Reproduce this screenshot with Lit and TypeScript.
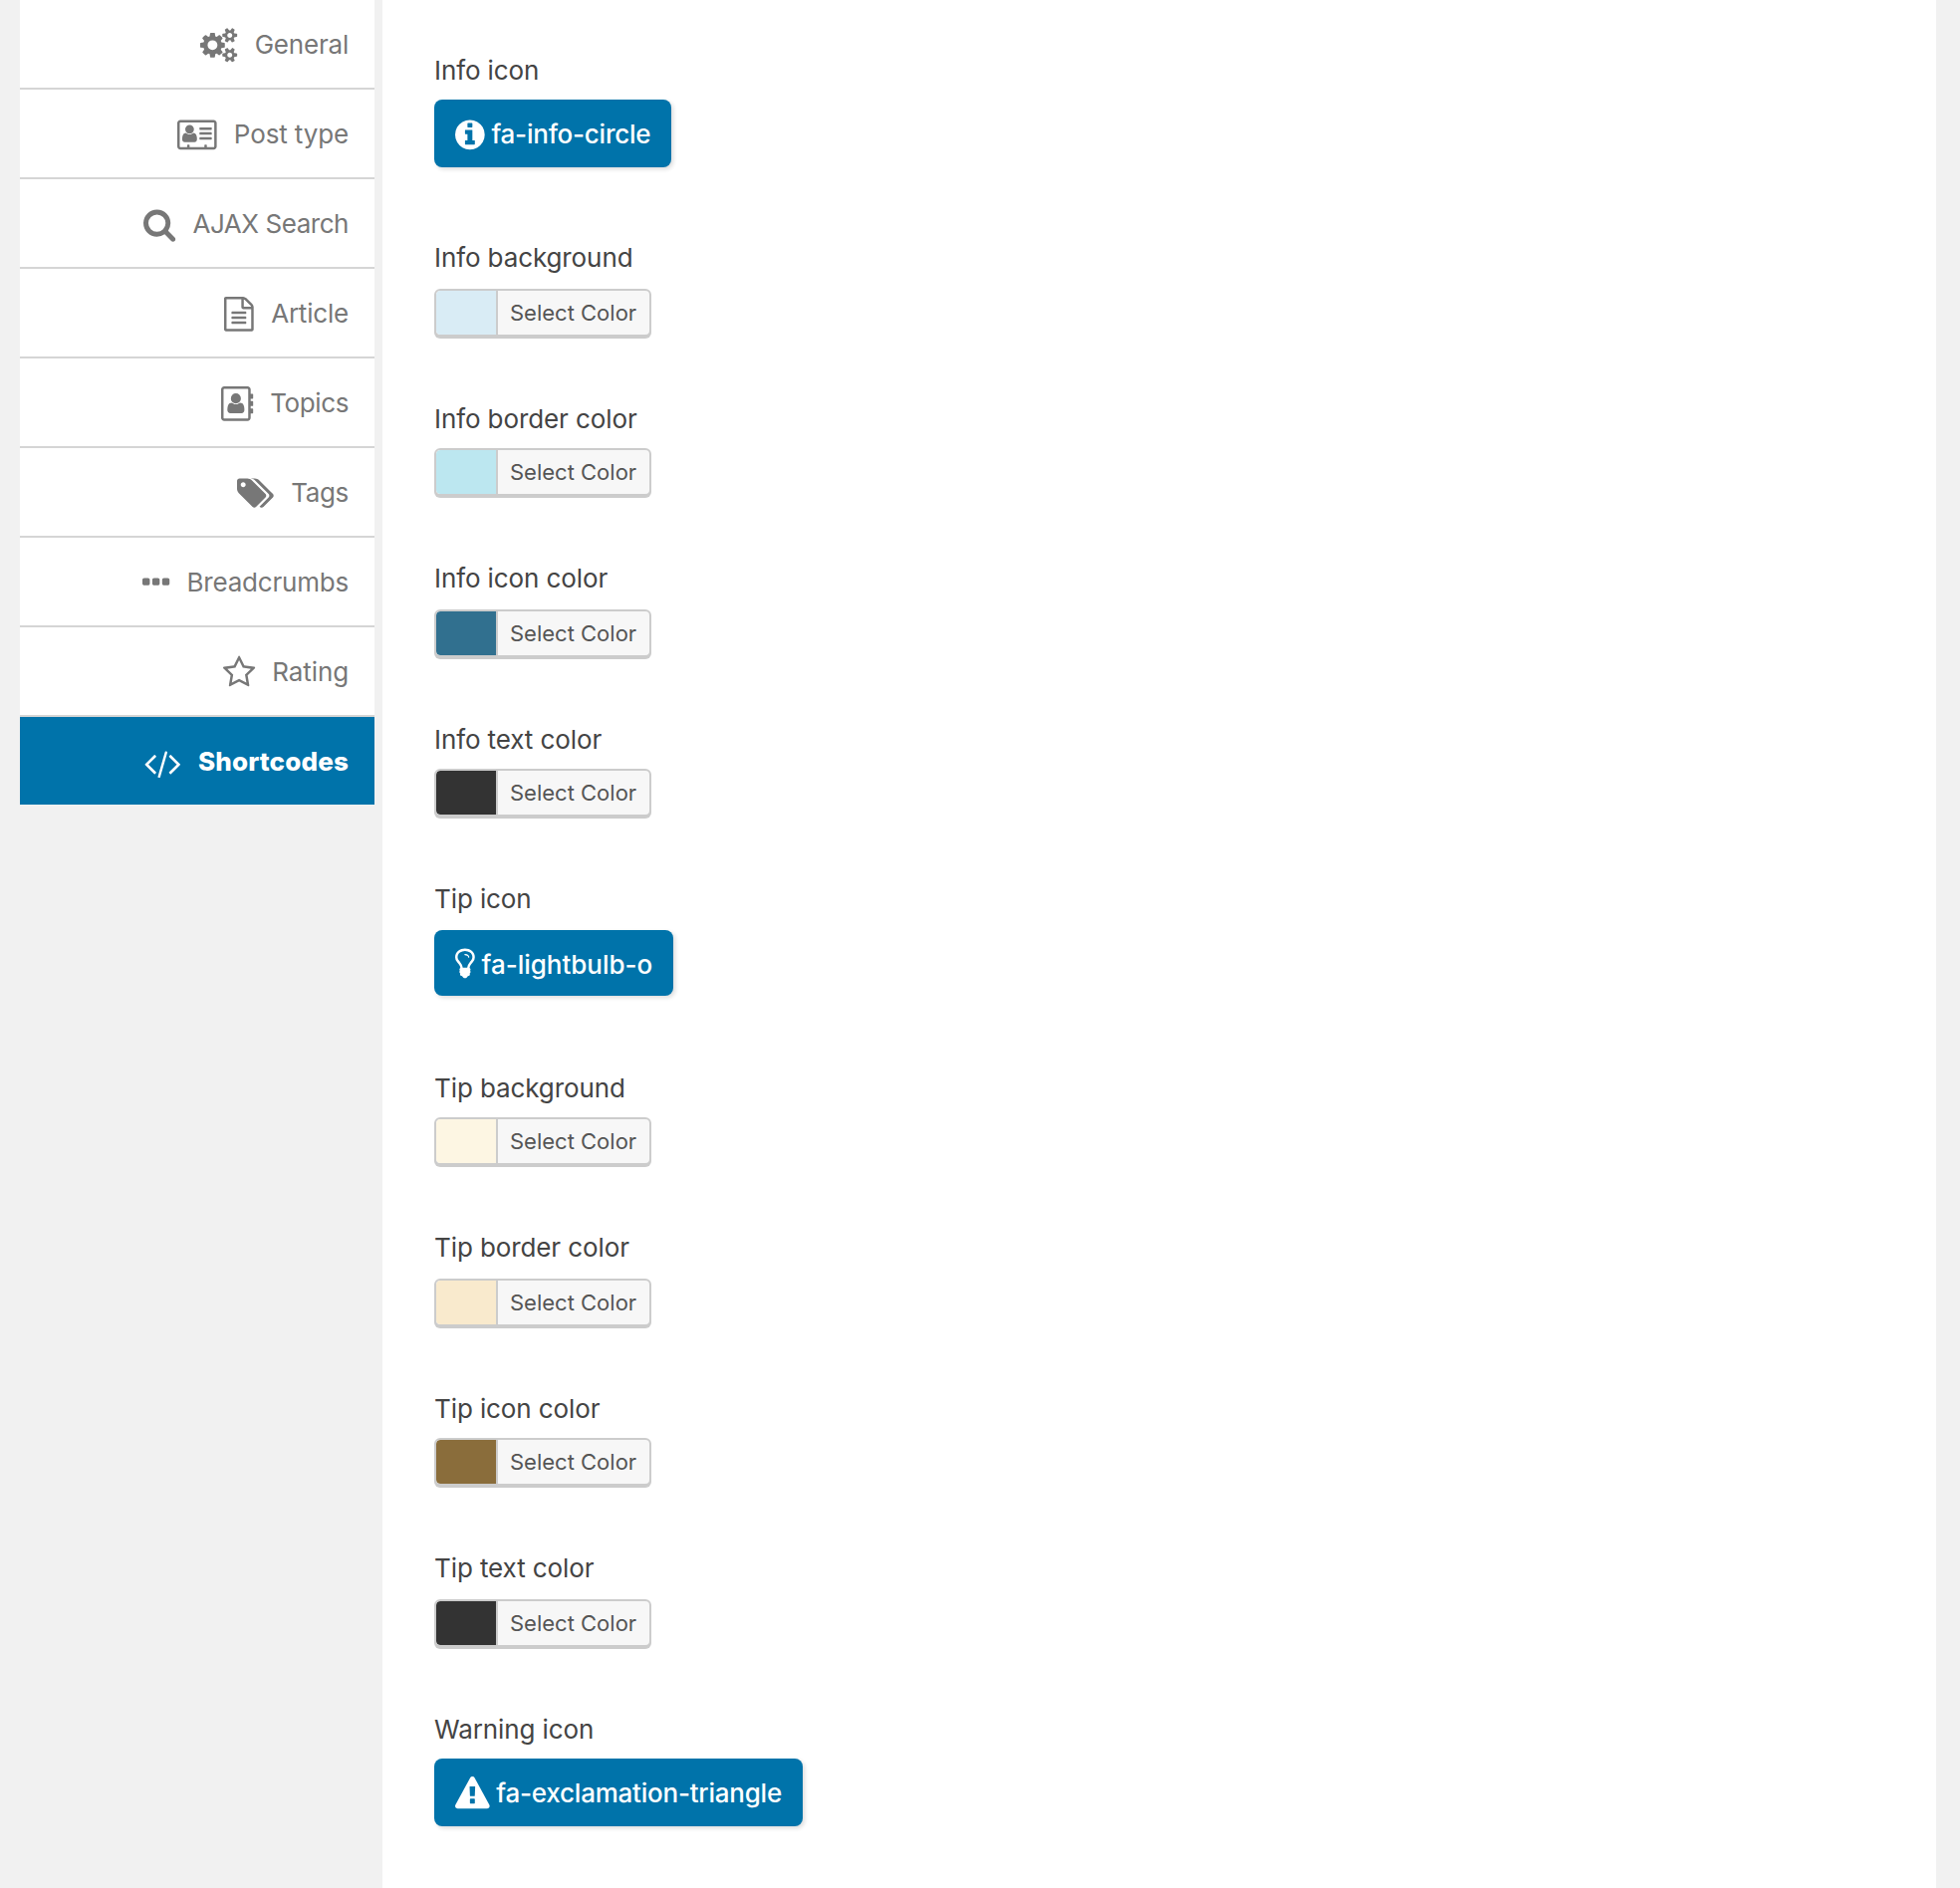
import { LitElement, html, svg, css } from "lit";
import { customElement } from "lit/decorators.js";
import { classMap } from "lit/directives/class-map.js";
import { styleMap } from "lit/directives/style-map.js";

/** Icon outlines on a 1792-unit em; x and w give each glyph's left edge and width. */
interface Glyph {
  x: number;
  w: number;
  dy?: number;
  body: unknown;
}

const EM = 34.6667;

const PERSON =
  "M1024 1131q0-64-9-117.5t-29.5-103-60.5-78-97-28.5q-6 4-30 18t-37.5 21.5-35.5 17.5-43 14.5-42 4.5-42-4.5-43-14.5-35.5-17.5-37.5-21.5-30-18q-57 0-97 28.5t-60.5 78-29.5 103-9 117.5 37 106.5 91 42.5h512q54 0 91-42.5t37-106.5zm-157-520q0-94-66.5-160.5t-160.5-66.5-160.5 66.5-66.5 160.5 66.5 160.5 160.5 66.5 160.5-66.5 66.5-160.5z";

const SMALL_GEAR_BODY =
  "v140q0 16-149 31-12 27-30 52 51 113 51 138 0 4-4 7-122 71-124 71-8 0-46-47t-52-68q-20 2-30 2t-30-2q-14 21-52 68t-46 47q-2 0-124-71-4-3-4-7 0-25 51-138-18-25-30-52-149-15-149-31v-140q0-16 149-31 13-29 30-52-51-113-51-138 0-4 4-7 4-2 35-20t59-34 30-16q8 0 46 46.5t52 67.5q20-2 30-2t30 2q51-71 92-112l6-2q4 0 124 70 4 3 4 7 0 25-51 138 17 23 30 52 149 15 149 31z";

const GLYPHS: Record<string, Glyph> = {
  cogs: {
    x: 0,
    w: 1920,
    body: svg`<path fill-rule="evenodd" d=${
      "M896 896q0-106-75-181t-181-75-181 75-75 181 75 181 181 75 181-75 75-181zm768 512q0-52-38-90t-90-38-90 38-38 90q0 53 37.5 90.5t90.5 37.5 90.5-37.5 37.5-90.5zm0-1024q0-52-38-90t-90-38-90 38-38 90q0 53 37.5 90.5t90.5 37.5 90.5-37.5 37.5-90.5zm-384 421v185q0 10-7 19.5t-16 10.5l-155 24q-11 35-32 76 34 48 90 115 7 11 7 20 0 12-7 19-23 30-82.5 89.5t-78.5 59.5q-11 0-21-7l-115-90q-37 19-77 31-11 108-23 155-7 24-30 24h-186q-11 0-20-7.5t-10-17.5l-23-153q-34-10-75-31l-118 89q-7 7-20 7-11 0-21-8-144-133-144-160 0-9 7-19 10-14 41-53t47-61q-23-44-35-82l-152-24q-10-1-17-9.5t-7-19.5v-185q0-10 7-19.5t16-10.5l155-24q11-35 32-76-34-48-90-115-7-11-7-20 0-12 7-20 22-30 82-89t79-59q11 0 21 7l115 90q34-18 77-32 11-108 23-154 7-24 30-24h186q11 0 20 7.5t10 17.5l23 153q34 10 75 31l118-89q8-7 20-7 11 0 21 8 144 133 144 160 0 8-7 19-12 16-42 54t-45 60q23 48 34 82l152 23q10 2 17 10.5t7 19.5z" +
      "M1920 1338" + SMALL_GEAR_BODY + "M1920 314" + SMALL_GEAR_BODY
    }></path>`,
  },
  card: {
    x: 0,
    w: 2048,
    body: svg`<path d=${PERSON}></path><path d="M1792 1120v-64q0-14-9-23t-23-9h-576q-14 0-23 9t-9 23v64q0 14 9 23t23 9h576q14 0 23-9t9-23zm0-260v-56q0-15-10.500-25.500t-25.500-10.500h-568q-15 0-25.500 10.500t-10.500 25.500v56q0 15 10.500 25.500t25.500 10.500h568q15 0 25.500-10.500t10.500-25.500zm0-252v-64q0-14-9-23t-23-9h-576q-14 0-23 9t-9 23v64q0 14 9 23t23 9h576q14 0 23-9t9-23z"></path><path fill-rule="evenodd" d="M1920 1504v-1216q0-13-9.500-22.500t-22.500-9.500h-1728q-13 0-22.500 9.500t-9.500 22.500v1216q0 13 9.500 22.500t22.500 9.500h352v-96q0-14 9-23t23-9h64q14 0 23 9t9 23v96h768v-96q0-14 9-23t23-9h64q14 0 23 9t9 23v96h352q13 0 22.500-9.500t9.500-22.500zM2048 288v1216q0 66-47 113t-113 47h-1728q-66 0-113-47t-47-113v-1216q0-66 47-113t113-47h1728q66 0 113 47t47 113z"></path>`,
  },
  search: {
    x: 64,
    w: 1664,
    body: svg`<path fill-rule="evenodd" d="M1216 832q0-185-131.500-316.500t-316.500-131.500-316.500 131.500-131.500 316.500 131.500 316.500 316.500 131.500 316.500-131.500 131.500-316.500zm512 832q0 52-38 90t-90 38q-54 0-90-38l-343-342q-179 124-399 124-143 0-273.500-55.500t-225-150-150-225-55.500-273.500 55.500-273.500 150-225 225-150 273.500-55.500 273.500 55.500 225 150 150 225 55.500 273.500q0 220-124 399l343 343q37 37 37 90z"></path>`,
  },
  file: {
    x: 128,
    w: 1536,
    body: svg`<path fill-rule="evenodd" d="M1596 380q28 28 48 76t20 88v1152q0 40-28 68t-68 28h-1344q-40 0-68-28t-28-68v-1600q0-40 28-68t68-28h896q40 0 88 20t76 48zm-444-244v376h376q-10-29-22-41l-313-313q-12-12-41-22zm384 1528v-1024h-416q-40 0-68-28t-28-68v-416h-768v1536h1280zm-1024-864q0-14 9-23t23-9h704q14 0 23 9t9 23v64q0 14-9 23t-23 9h-704q-14 0-23-9t-9-23v-64zm736 224q14 0 23 9t9 23v64q0 14-9 23t-23 9h-704q-14 0-23-9t-9-23v-64q0-14 9-23t23-9h704zm0 256q14 0 23 9t9 23v64q0 14-9 23t-23 9h-704q-14 0-23-9t-9-23v-64q0-14 9-23t23-9h704z"></path>`,
  },
  book: {
    x: 0,
    w: 1664,
    body: svg`<path transform="translate(32 -75) scale(1.15)" d=${PERSON}></path><path fill-rule="evenodd" d="M160 0h1216q66 0 113 47t47 113v1472q0 66-47 113t-113 47h-1216q-66 0-113-47t-47-113v-1472q0-66 47-113t113-47zM160 128q-13 0-22.500 9.500t-9.500 22.500v1472q0 13 9.500 22.500t22.500 9.500h1216q13 0 22.500-9.500t9.500-22.500v-1472q0-13-9.500-22.500t-22.500-9.500z"></path><path d="M1500 384h132q32 0 32 32v192q0 32-32 32h-132zM1500 768h132q32 0 32 32v192q0 32-32 32h-132zM1500 1152h132q32 0 32 32v192q0 32-32 32h-132z"></path>`,
  },
  tags: {
    x: 0,
    w: 1920,
    body: svg`<path fill-rule="evenodd" d="M448 448q0-53-37.500-90.500t-90.500-37.500-90.500 37.500-37.500 90.500 37.500 90.500 90.500 37.500 90.500-37.500 37.500-90.500zm1067 576q0 53-37 90l-491 492q-39 37-91 37-53 0-90-37l-715-716q-38-37-64.500-101t-26.500-117v-416q0-52 38-90t90-38h416q53 0 117 26.500t102 64.500l715 714q37 39 37 91zm384 0q0 53-37 90l-491 492q-39 37-91 37-36 0-59-14t-53-45l470-470q37-37 37-90 0-52-37-91l-715-714q-38-38-102-64.500t-117-26.500h224q53 0 117 26.500t102 64.500l715 714q37 39 37 91z"></path>`,
  },
  dots: {
    x: 192,
    w: 1408,
    body: svg`<path d="M576 736v192q0 40-28 68t-68 28h-192q-40 0-68-28t-28-68v-192q0-40 28-68t68-28h192q40 0 68 28t28 68zm512 0v192q0 40-28 68t-68 28h-192q-40 0-68-28t-28-68v-192q0-40 28-68t68-28h192q40 0 68 28t28 68zm512 0v192q0 40-28 68t-68 28h-192q-40 0-68-28t-28-68v-192q0-40 28-68t68-28h192q40 0 68 28t28 68z"></path>`,
  },
  star: {
    x: 64,
    w: 1664,
    body: svg`<path fill-rule="evenodd" d="M1201 1004l306-297-422-62-189-382-189 382-422 62 306 297-73 421 378-199 377 199zm527-357q0 22-26 48l-363 354 86 500q1 7 1 20 0 50-41 50-19 0-40-12l-449-236-449 236q-22 12-40 12-21 0-31.500-14.500t-10.500-35.500q0-6 2-20l86-500-364-354q-25-27-25-48 0-37 56-46l502-73 225-455q19-41 49-41t49 41l225 455 502 73q56 9 56 46z"></path>`,
  },
  code: {
    x: 2,
    w: 1850,
    dy: 1.2,
    body: svg`<path d="M553 1399l-50 50q-10 10-23 10t-23-10l-466-466q-10-10-10-23t10-23l466-466q10-10 23-10t23 10l50 50q10 10 10 23t-10 23l-393 393 393 393q10 10 10 23t-10 23zm591-1067l-373 1291q-4 13-15.500 19.500t-23.500 2.500l-62-17q-13-4-19.500-15.500t-2.500-24.500l373-1291q4-13 15.500-19.500t23.500-2.500l62 17q13 4 19.500 15.500t2.500 24.500zm657 651l-466 466q-10 10-23 10t-23-10l-50-50q-10-10-10-23t10-23l393-393-393-393q-10-10-10-23t10-23l50-50q10-10 23-10t23 10l466 466q10 10 10 23t-10 23z"></path>`,
  },
  info: {
    x: 128,
    w: 1536,
    body: svg`<path fill-rule="evenodd" d="M1152 1376v-160q0-14-9-23t-23-9h-96v-512q0-14-9-23t-23-9h-320q-14 0-23 9t-9 23v160q0 14 9 23t23 9h96v320h-96q-14 0-23 9t-9 23v160q0 14 9 23t23 9h448q14 0 23-9t9-23zm-128-896v-160q0-14-9-23t-23-9h-192q-14 0-23 9t-9 23v160q0 14 9 23t23 9h192q14 0 23-9t9-23zm640 416q0 209-103 385.500t-279.500 279.500-385.500 103-385.500-103-279.500-279.500-103-385.500 103-385.500 279.500-279.500 385.500-103 385.500 103 279.500 279.500 103 385.500z"></path>`,
  },
  bulb: {
    x: 384,
    w: 1024,
    dy: -2,
    body: svg`<path fill-rule="evenodd" d="M1120 576q0 13-9.500 22.500t-22.500 9.500-22.500-9.500-9.500-22.500q0-46-54-71t-106-25q-13 0-22.500-9.500t-9.500-22.500 9.500-22.500 22.500-9.500q50 0 99.500 16t87 54 37.500 90zm160 0q0-72-34.500-134t-90-101.500-123-62-136.500-22.500-136.500 22.500-123 62-90 101.500-34.500 134q0 101 68 180 10 11 30.500 33t30.500 33q128 153 141 298h228q13-145 141-298 10-11 30.500-33t30.500-33q68-79 68-180zm128 0q0 155-103 268-45 49-74.500 87t-59.500 95.500-34 107.500q47 28 47 82 0 37-25 64 25 27 25 64 0 52-45 81 13 23 13 47 0 46-31.500 71t-77.500 25q-20 44-60 70t-87 26-87-26-60-70q-46 0-77.500-25t-31.500-71q0-24 13-47-45-29-45-81 0-37 25-64-25-27-25-64 0-54 47-82-4-50-34-107.500t-59.500-95.500-74.500-87q-103-113-103-268 0-99 44.500-184.500t117-142 164-89 186.500-32.500 186.500 32.500 164 89 117 142 44.500 184.500z"></path>`,
  },
  warning: {
    x: 0,
    w: 1792,
    body: svg`<path fill-rule="evenodd" d="M1024 1375v-190q0-14-9.500-23.500t-22.500-9.500h-192q-13 0-22.500 9.500t-9.500 23.500v190q0 14 9.500 23.500t22.500 9.500h192q13 0 22.500-9.500t9.500-23.500zm-2-374l18-459q0-12-10-19-13-11-24-11h-220q-11 0-24 11-10 7-10 21l17 457q0 10 10 16.500t24 6.500h185q14 0 23.500-6.500t10.500-16.500zm-14-934l768 1408q35 63-2 126-17 29-46.500 46t-63.500 17h-1536q-34 0-63.500-17t-46.500-46q-37-63-2-126l768-1408q17-31 47-49t65-18 65 18 47 49z"></path>`,
  },
};

function icon(name: string) {
  const g = GLYPHS[name];
  const u = 1792 / EM;
  return html`<svg
    class="icon"
    aria-hidden="true"
    width=${g.w / u}
    height=${EM}
    viewBox="${g.x} ${-(g.dy ?? 0) * u} ${g.w} 1792"
  >${g.body}</svg>`;
}

interface NavItem { label: string; icon: string; track: number; active?: boolean }

const NAV: NavItem[] = [
  { label: "General", icon: "cogs", track: -0.2 },
  { label: "Post type", icon: "card", track: -0.13 },
  { label: "AJAX Search", icon: "search", track: -0.46 },
  { label: "Article", icon: "file", track: -0.2 },
  { label: "Topics", icon: "book", track: -0.38 },
  { label: "Tags", icon: "tags", track: -0.35 },
  { label: "Breadcrumbs", icon: "dots", track: -0.2 },
  { label: "Rating", icon: "star", track: -0.1 },
  { label: "Shortcodes", icon: "code", track: 0.15, active: true },
];

type Field =
  | { kind: "icon"; label: string; icon: string; value: string; track: number; short?: boolean }
  | { kind: "color"; label: string; value: string };

const FIELDS: Field[] = [
  { kind: "icon", label: "Info icon", icon: "info", value: "fa-info-circle", track: -0.23 },
  { kind: "color", label: "Info background", value: "#d9ecf5" },
  { kind: "color", label: "Info border color", value: "#bce7f0" },
  { kind: "color", label: "Info icon color", value: "#31708f" },
  { kind: "color", label: "Info text color", value: "#333333" },
  { kind: "icon", label: "Tip icon", icon: "bulb", value: "fa-lightbulb-o", track: -0.02, short: true },
  { kind: "color", label: "Tip background", value: "#fdf6e3" },
  { kind: "color", label: "Tip border color", value: "#f9eacd" },
  { kind: "color", label: "Tip icon color", value: "#8a6d3b" },
  { kind: "color", label: "Tip text color", value: "#333333" },
  { kind: "icon", label: "Warning icon", icon: "warning", value: "fa-exclamation-triangle", track: -0.23 },
];

@customElement("app-root")
export class AppRoot extends LitElement {
  static styles = css`
    :host {
      display: block;
      height: 1896px;
      overflow: hidden;
      background: #f1f1f1;
      font-family: Inter, "Liberation Sans", sans-serif;
      font-size: 26px;
      line-height: 31px;
    }
    .page {
      box-sizing: border-box;
      display: grid;
      grid-template-columns: 356px 1fr;
      column-gap: 8px;
      height: 100%;
      padding: 0 24px 0 20px;
    }
    .icon {
      display: block;
      flex: none;
      fill: currentColor;
      overflow: visible;
    }
    .item {
      box-sizing: border-box;
      display: flex;
      justify-content: flex-end;
      gap: 17px;
      height: 90px;
      padding: 29px 26px 0 0;
      border-bottom: 2px solid #d5d5d5;
      background: #fff;
      color: #777;
      font-weight: 400;
      white-space: nowrap;
    }
    .item .icon {
      margin-top: -0.8px;
    }
    .active {
      height: 88px;
      border-bottom: 0;
      background: #0073aa;
      color: #fff;
      font-weight: 800;
    }
    .panel {
      display: flex;
      flex-direction: column;
      padding: 52px 0 0 52px;
      background: #fff;
    }
    .field {
      display: flex;
      flex-direction: column;
      align-items: flex-start;
      gap: 12px;
    }
    .field:nth-child(even) {
      gap: 14px;
    }
    .label {
      height: 36px;
      line-height: 37px;
      color: #444;
      letter-spacing: -0.1px;
    }
    .button {
      box-sizing: border-box;
      display: flex;
      gap: 7px;
      height: 68px;
      margin-bottom: 72px;
      padding: 19px 20.7px 0;
      border-radius: 8px;
      background: #0073aa;
      box-shadow: 2px 2px 4px rgba(0, 0, 0, 0.14);
      color: #fff;
      font-weight: 500;
      white-space: nowrap;
    }
    .button .icon {
      margin-top: -0.8px;
    }
    .short {
      height: 66px;
      margin-bottom: 74px;
    }
    .picker {
      box-sizing: border-box;
      display: flex;
      width: 218px;
      height: 48px;
      margin-bottom: 64px;
      border: 2px solid #ccc;
      border-radius: 6px;
      background: #f7f7f7;
      box-shadow: 0 2px 0 #ccc;
      overflow: hidden;
    }
    .swatch {
      width: 60px;
      border-radius: 4px 0 0 4px;
    }
    .select {
      flex: 1;
      padding-left: 12px;
      border-left: 2px solid #ccc;
      color: #555;
      font-size: 22px;
      line-height: 44px;
    }
  `;

  private renderControl(f: Field) {
    if (f.kind === "icon") {
      return html`<div class=${classMap({ button: true, short: !!f.short })}>
        ${icon(f.icon)}<span style=${styleMap({ letterSpacing: `${f.track}px` })}>${f.value}</span>
      </div>`;
    }
    return html`<div class="picker">
      <span class="swatch" style=${styleMap({ backgroundColor: f.value })}></span>
      <span class="select">Select Color</span>
    </div>`;
  }

  render() {
    return html`<div class="page">
      <nav class="nav">
        ${NAV.map(
          (n) => html`<div class=${classMap({ item: true, active: !!n.active })}>
            ${icon(n.icon)}<span style=${styleMap({ letterSpacing: `${n.track}px` })}>${n.label}</span>
          </div>`
        )}
      </nav>
      <main class="panel">
        ${FIELDS.map(
          (f) => html`<section class="field">
            <span class="label">${f.label}</span>
            ${this.renderControl(f)}
          </section>`
        )}
      </main>
    </div>`;
  }
}
